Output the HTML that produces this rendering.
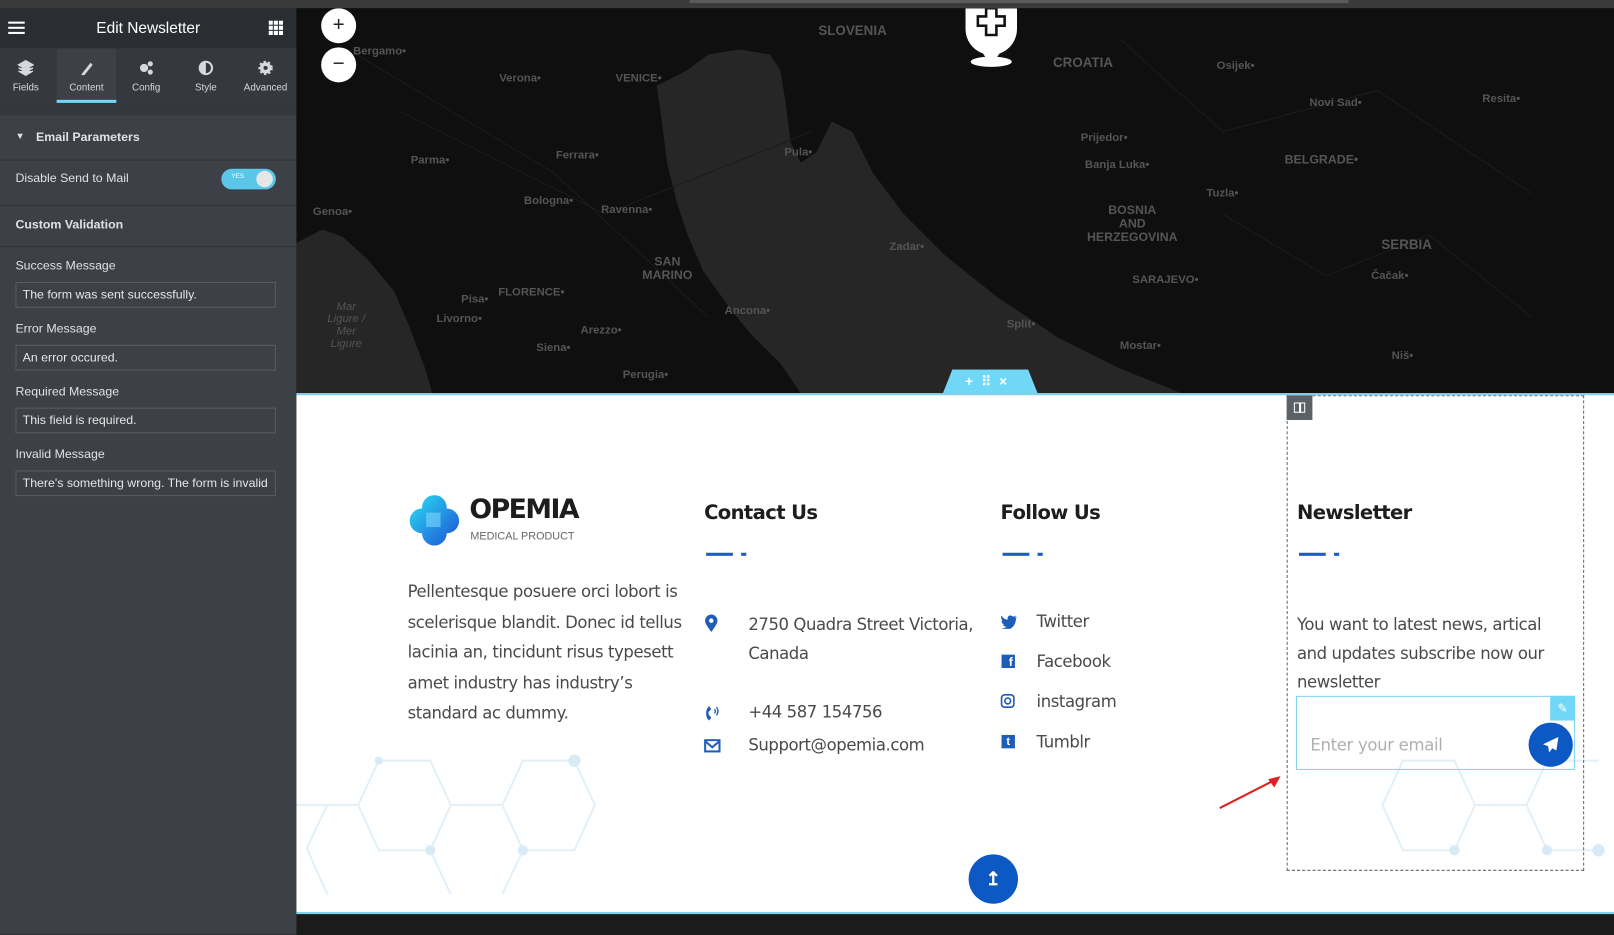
<!DOCTYPE html>
<html><head><meta charset="utf-8"><style>
*{box-sizing:border-box;margin:0;padding:0}
html,body{width:1614px;height:935px;overflow:hidden;background:#1b1b1b;font-family:"Liberation Sans",sans-serif}
#w{position:absolute;left:0;top:0;width:1568px;height:908px;transform:scale(1.02934);transform-origin:0 0;background:#1b1b1b}
.a{position:absolute}
.side{left:0;top:8px;width:288px;height:900px;background:#3d4046}
.hd{left:0;top:0;width:288px;height:39px;background:#2a2d31;color:#fff;font-size:15px;text-align:center;line-height:39px}
.tabs{left:0;top:39px;width:288px;height:53px;background:#35383d}
.tab{position:absolute;top:0;width:58px;height:53px;text-align:center;color:#d5d8dc;font-size:9.5px}
.tab span{position:absolute;left:0;right:0;top:33px}
.row{position:absolute;left:0;width:288px;border-bottom:1px solid #31343a;color:#e0e1e3;font-size:12px}
.lbl{position:absolute;left:15px;color:#e0e1e3;font-size:12px}
.inp{position:absolute;left:15px;width:253px;height:25px;background:#3d4046;border:1px solid #5a5d63;color:#e6e6e6;font-size:12px;line-height:23px;padding-left:6px;white-space:nowrap;overflow:hidden}
.map{left:288px;top:8px;width:1280px;height:374px;background:#0f0f0f;overflow:hidden}
.ml{position:absolute;color:#555;font-size:11px;font-weight:bold}
.foot{left:288px;top:382px;width:1280px;height:506px;background:#fff;border-top:2px solid #7fd3ef;border-bottom:2px solid #7fd3ef;overflow:hidden}
.h3{position:absolute;font-size:19px;font-weight:bold;color:#1d1d1d;font-family:"DejaVu Sans","Liberation Sans",sans-serif;letter-spacing:-.6px}
.dash{position:absolute;height:3px;background:#1f5eb8}
.t{position:absolute;color:#4a4a4a;font-size:16px;font-family:"DejaVu Sans","Liberation Sans",sans-serif;letter-spacing:-.4px}
</style></head><body><div id="w">
<div class="a" style="left:0;top:0;width:1568px;height:8px;background:#3a3a3a"></div>
<div class="a" style="left:670px;top:0;width:640px;height:3px;background:#5a5a5a"></div>
<div class="a side">
 <div class="a hd">Edit Newsletter</div>
 <div class="a" style="left:8px;top:13px;width:16px;height:2px;background:#fff;box-shadow:0 5px 0 #fff,0 10px 0 #fff"></div>
 <svg class="a" style="left:261px;top:12px" width="14" height="14"><g fill="#fff"><rect x="0" y="0" width="4" height="4"/><rect x="5" y="0" width="4" height="4"/><rect x="10" y="0" width="4" height="4"/><rect x="0" y="5" width="4" height="4"/><rect x="5" y="5" width="4" height="4"/><rect x="10" y="5" width="4" height="4"/><rect x="0" y="10" width="4" height="4"/><rect x="5" y="10" width="4" height="4"/><rect x="10" y="10" width="4" height="4"/></g></svg>
 <div class="a tabs">
  <div class="tab" style="left:-4px"><svg class="a" style="left:21px;top:11px" width="16" height="16"><path d="M8 1 15 5 8 9 1 5Z M1 8 8 12 15 8 M1 11 8 15 15 11" fill="#d5d8dc" stroke="#d5d8dc" stroke-width="1.4"/></svg><span>Fields</span></div>
  <div class="tab" style="left:55px;background:#3d4046;border-bottom:3px solid #71d7f7"><svg class="a" style="left:22px;top:11px" width="14" height="16"><path d="M3 13 11 3 13 5 5 15 2 15Z" fill="#d5d8dc"/></svg><span>Content</span></div>
  <div class="tab" style="left:113px"><svg class="a" style="left:21px;top:11px" width="16" height="16"><circle cx="6" cy="8" r="4" fill="#d5d8dc"/><circle cx="12" cy="4" r="2.5" fill="#d5d8dc"/><circle cx="12" cy="12" r="2.5" fill="#d5d8dc"/></svg><span>Config</span></div>
  <div class="tab" style="left:171px"><svg class="a" style="left:21px;top:11px" width="16" height="16"><circle cx="8" cy="8" r="7" fill="#d5d8dc"/><path d="M8 3a5 5 0 0 1 0 10Z" fill="#35383d"/></svg><span>Style</span></div>
  <div class="tab" style="left:229px"><svg class="a" style="left:21px;top:11px" width="16" height="16"><circle cx="8" cy="8" r="5.5" fill="#d5d8dc" stroke="#d5d8dc" stroke-width="3" stroke-dasharray="2 2"/><circle cx="8" cy="8" r="2" fill="#35383d"/></svg><span>Advanced</span></div>
 </div>
 <div class="a" style="left:0;top:92px;width:288px;height:12px;background:#34373c"></div>
 <div class="row" style="top:104px;height:44px"><span style="position:absolute;left:15px;top:15px;font-size:9px">▼</span><b style="position:absolute;left:35px;top:14px">Email Parameters</b></div>
 <div class="row" style="top:148px;height:44px"><span style="position:absolute;left:15px;top:10px">Disable Send to Mail</span>
  <div class="a" style="left:215px;top:8px;width:53px;height:20px;border-radius:10px;background:#5ac6e8"><span style="position:absolute;left:10px;top:5px;font-size:6px;color:#fff">YES</span><div class="a" style="left:34px;top:2px;width:16px;height:16px;border-radius:50%;background:#e6e6e6"></div></div></div>
 <div class="row" style="top:192px;height:40px"><b style="position:absolute;left:15px;top:11px">Custom Validation</b></div>
 <div class="lbl" style="top:243px">Success Message</div><div class="inp" style="top:266px">The form was sent successfully.</div>
 <div class="lbl" style="top:304px">Error Message</div><div class="inp" style="top:327px">An error occured.</div>
 <div class="lbl" style="top:365px">Required Message</div><div class="inp" style="top:388px">This field is required.</div>
 <div class="lbl" style="top:426px">Invalid Message</div><div class="inp" style="top:449px">There's something wrong. The form is invalid</div>
</div>
<div class="a" style="left:288px;top:625px;width:14px;height:48px;background:#3d4046;color:#ddd;font-size:12px;line-height:48px;text-align:center">‹</div>
<div class="a map">
 <svg class="a" style="left:0;top:0" width="1280" height="374"><g fill="#262626">
 <path d="M0 228 L25 215 45 222 70 245 95 275 110 310 125 350 132 374 0 374Z"/>
 <path d="M350 75 L365 68 380 60 400 45 430 40 460 45 470 60 475 90 480 130 490 150 505 140 520 110 540 120 560 160 590 200 630 240 680 280 740 320 800 350 860 374 490 374 470 345 440 315 420 290 395 255 380 220 370 190 360 150 355 110Z"/>
 </g><g stroke="#1c1c1c" fill="none" stroke-width="1"><path d="M100 100 300 200 500 120"/><path d="M50 40 250 160 400 300"/><path d="M800 30 900 120 1050 80 1200 180"/><path d="M900 200 1000 260 1100 220 1200 300"/></g></svg>
 <div class="ml" style="left:507px;top:14px;font-size:13px">SLOVENIA</div>
 <div class="ml" style="left:735px;top:45px;font-size:13px">CROATIA</div>
 <div class="ml" style="left:960px;top:140px;font-size:12px">BELGRADE•</div>
 <div class="ml" style="left:768px;top:190px;font-size:12px;text-align:center;line-height:13px">BOSNIA<br>AND<br>HERZEGOVINA</div>
 <div class="ml" style="left:1054px;top:222px;font-size:13px">SERBIA</div>
 <div class="ml" style="left:336px;top:240px;font-size:12px;text-align:center;line-height:13px">SAN<br>MARINO</div>
 <div class="ml" style="left:196px;top:270px">FLORENCE•</div>
 <div class="ml" style="left:55px;top:36px">Bergamo•</div><div class="ml" style="left:197px;top:62px">Verona•</div><div class="ml" style="left:310px;top:62px">VENICE•</div>
 <div class="ml" style="left:111px;top:142px">Parma•</div><div class="ml" style="left:252px;top:137px">Ferrara•</div><div class="ml" style="left:221px;top:181px">Bologna•</div><div class="ml" style="left:296px;top:190px">Ravenna•</div>
 <div class="ml" style="left:16px;top:192px">Genoa•</div><div class="ml" style="left:160px;top:277px">Pisa•</div><div class="ml" style="left:136px;top:296px">Livorno•</div><div class="ml" style="left:276px;top:307px">Arezzo•</div><div class="ml" style="left:233px;top:324px">Siena•</div><div class="ml" style="left:317px;top:350px">Perugia•</div><div class="ml" style="left:416px;top:288px">Ancona•</div>
 <div class="ml" style="left:762px;top:120px">Prijedor•</div><div class="ml" style="left:766px;top:146px">Banja Luka•</div><div class="ml" style="left:884px;top:174px">Tuzla•</div><div class="ml" style="left:812px;top:258px">SARAJEVO•</div><div class="ml" style="left:1044px;top:254px">Čačak•</div><div class="ml" style="left:690px;top:301px">Split•</div><div class="ml" style="left:800px;top:322px">Mostar•</div><div class="ml" style="left:576px;top:226px">Zadar•</div><div class="ml" style="left:474px;top:134px">Pula•</div><div class="ml" style="left:894px;top:50px">Osijek•</div><div class="ml" style="left:984px;top:86px">Novi Sad•</div><div class="ml" style="left:1152px;top:82px">Resita•</div><div class="ml" style="left:1064px;top:332px">Niš•</div>
 <div class="ml" style="left:30px;top:284px;font-style:italic;font-weight:normal;text-align:center;line-height:12px">Mar<br>Ligure /<br>Mer<br>Ligure</div>
 <div class="a" style="left:24px;top:0px;width:34px;height:34px;border-radius:50%;background:#fff;text-align:center;line-height:32px;font-size:20px;color:#222">+</div>
 <div class="a" style="left:24px;top:38px;width:34px;height:34px;border-radius:50%;background:#fff;text-align:center;line-height:32px;font-size:20px;color:#222">−</div>
 <svg class="a" style="left:648px;top:0" width="54" height="58"><path d="M2 0 H52 V20 A25 25 0 0 1 35 44 L27 56 19 44 A25 25 0 0 1 2 20Z" fill="#fff"/><ellipse cx="27" cy="52" rx="20" ry="5" fill="#fff"/><path d="M22 0 H32 V8 H40 V17 H32 V26 H22 V17 H14 V8 H22Z" fill="#fff" stroke="#111" stroke-width="2.5"/></svg>
 <div class="a" style="left:628px;top:351px;width:92px;height:23px;background:#71d7f7;clip-path:polygon(10% 0,90% 0,100% 100%,0 100%);color:#fff;font-size:13px;font-weight:bold;text-align:center;line-height:23px;letter-spacing:8px">+⠿×</div>
</div>
<div class="a foot">
 <svg class="a" style="left:0;top:300px" width="1280" height="206"><g stroke="#e3f0f8" stroke-width="2" fill="none"><path d="M80 55 L130 55 L150 98 L130 142 L80 142 L60 98Z M150 98 L200 98 M200 98 L220 55 L270 55 L290 98 L270 142 L220 142Z M0 98 L60 98 M130 142 L150 185 M220 142 L200 185 M30 98 L10 140 L30 185"/><path d="M1075 55 L1125 55 L1145 98 L1125 142 L1075 142 L1055 98Z M1145 98 L1195 98 L1215 55 L1265 55 M1195 98 L1215 142 L1265 142"/></g><g fill="#d8eaf6"><circle cx="80" cy="55" r="4"/><circle cx="130" cy="142" r="5"/><circle cx="220" cy="142" r="5"/><circle cx="270" cy="55" r="6"/><circle cx="1125" cy="142" r="5"/><circle cx="1215" cy="142" r="5"/><circle cx="1265" cy="142" r="6"/></g></svg>
 <svg class="a" style="left:108px;top:97px" width="50" height="50"><defs><linearGradient id="g" x1="0" y1="0" x2="1" y2="1"><stop offset="0" stop-color="#2de0f5"/><stop offset="1" stop-color="#1b4fd4"/></linearGradient></defs><path d="M14 12 A12 12 0 0 1 38 12 V13 A12 12 0 0 1 38 37 A12 12 0 0 1 14 37 A12 12 0 0 1 14 13Z" fill="url(#g)"/><rect x="18" y="17" width="14" height="14" fill="#7fd6fb" opacity=".6"/></svg>
 <div class="a" style="left:168px;top:96px;font-size:26px;font-weight:bold;color:#1d1d1d;letter-spacing:-1.5px;font-family:'DejaVu Sans','Liberation Sans',sans-serif">OPEMIA</div>
 <div class="a" style="left:169px;top:131px;font-size:10.5px;color:#666">MEDICAL PRODUCT</div>
 <div class="t" style="left:108px;top:176px;line-height:29.5px;width:290px">Pellentesque posuere orci lobort is scelerisque blandit. Donec id tellus lacinia an, tincidunt risus typesett amet industry has industry’s standard ac dummy.</div>
 <div class="h3" style="left:396px;top:103px">Contact Us</div><div class="dash" style="left:398px;top:153px;width:26px"></div><div class="dash" style="left:432px;top:153px;width:5px"></div>
 <div class="h3" style="left:684px;top:103px">Follow Us</div><div class="dash" style="left:686px;top:153px;width:26px"></div><div class="dash" style="left:720px;top:153px;width:5px"></div>
 <div class="h3" style="left:972px;top:103px">Newsletter</div><div class="dash" style="left:974px;top:153px;width:26px"></div><div class="dash" style="left:1008px;top:153px;width:5px"></div>
 <svg class="a" style="left:396px;top:213px" width="14" height="18"><path d="M7 17 C2 10 1 8 1 6 A6 6 0 0 1 13 6 C13 8 12 10 7 17Z" fill="#1f5eb8"/><circle cx="7" cy="6" r="2.2" fill="#fff"/></svg>
 <div class="t" style="left:439px;top:209px;line-height:28px">2750 Quadra Street Victoria,<br>Canada</div>
 <svg class="a" style="left:396px;top:301px" width="16" height="16"><path d="M5 1 C1 4 1 12 5 15 L7 12 5 10 C4 8 4 7 5 6 L7 4Z" fill="#1f5eb8"/><path d="M10 4 Q12 6 10 8 M12 2 Q15 6 12 10" stroke="#1f5eb8" fill="none" stroke-width="1.3"/></svg>
 <div class="t" style="left:439px;top:298px">+44 587 154756</div>
 <svg class="a" style="left:396px;top:334px" width="16" height="13"><rect x="1" y="1" width="14" height="11" fill="none" stroke="#1f5eb8" stroke-width="2"/><path d="M1 2 8 8 15 2" fill="none" stroke="#1f5eb8" stroke-width="2"/></svg>
 <div class="t" style="left:439px;top:330px">Support@opemia.com</div>
 <svg class="a" style="left:684px;top:213px" width="16" height="14"><path d="M16 2 C15 3 14 3 14 3 C15 2 15 1 15 1 C14 2 13 2 12 2 C10 0 6 1 7 5 C4 5 2 3 1 1 C0 3 1 5 2 6 C1 6 1 6 1 6 C1 8 2 9 4 10 C3 10 2 10 2 10 C3 11 4 12 6 12 C4 13 2 14 0 13 C9 18 15 11 15 4 Z" fill="#1f5eb8"/></svg>
 <div class="t" style="left:719px;top:210px">Twitter</div>
 <div class="a" style="left:685px;top:252px;width:13px;height:13px;background:#1f5eb8;color:#fff;font-size:12px;font-weight:bold;text-align:right;line-height:15px;padding-right:2px">f</div>
 <div class="t" style="left:719px;top:249px">Facebook</div>
 <svg class="a" style="left:684px;top:290px" width="14" height="14"><rect x="1" y="1" width="12" height="12" rx="3" fill="none" stroke="#1f5eb8" stroke-width="1.6"/><circle cx="7" cy="7" r="2.8" fill="none" stroke="#1f5eb8" stroke-width="1.6"/></svg>
 <div class="t" style="left:719px;top:288px">instagram</div>
 <div class="a" style="left:685px;top:330px;width:13px;height:13px;background:#1f5eb8;color:#fff;font-size:11px;font-weight:bold;text-align:center;line-height:14px">t</div>
 <div class="t" style="left:719px;top:327px">Tumblr</div>
 <div class="t" style="left:972px;top:209px;line-height:28px;width:270px">You want to latest news, artical and updates subscribe now our newsletter</div>
 <div class="a" style="left:962px;top:0;width:289px;height:462px;border:1px dashed #666"></div>
 <div class="a" style="left:962px;top:0;width:25px;height:24px;background:#5c6166"><div class="a" style="left:7px;top:7px;width:11px;height:10px;border:1.5px solid #fff"></div><div class="a" style="left:12px;top:7px;width:1.5px;height:10px;background:#fff"></div></div>
 <div class="a" style="left:971px;top:292px;width:271px;height:72px;border:1px solid #7fd3ef"></div>
 <div class="a" style="left:1218px;top:292px;width:24px;height:24px;background:#71d7f7;color:#fff;font-size:12px;text-align:center;line-height:24px">✎</div>
 <div class="a" style="left:985px;top:330px;color:#b0b0b0;font-size:16px;font-family:'DejaVu Sans','Liberation Sans',sans-serif;letter-spacing:-.3px">Enter your email</div>
 <div class="a" style="left:1197px;top:318px;width:43px;height:43px;border-radius:50%;background:#0d59c4"><svg class="a" style="left:13px;top:13px" width="17" height="17"><path d="M16 1 1 8 6 10 7 16 10 12 14 14Z" fill="#fff"/></svg></div>
 <svg class="a" style="left:894px;top:368px" width="66" height="36"><path d="M3 33 58 5" stroke="#e02020" stroke-width="2"/><path d="M62 2 50 5 56 13Z" fill="#e02020"/></svg>
 <div class="a" style="left:653px;top:446px;width:48px;height:48px;border-radius:50%;background:#0d59c4;color:#fff;font-size:18px;font-weight:bold;text-align:center;line-height:48px">↥</div>
</div>
</div></body></html>
